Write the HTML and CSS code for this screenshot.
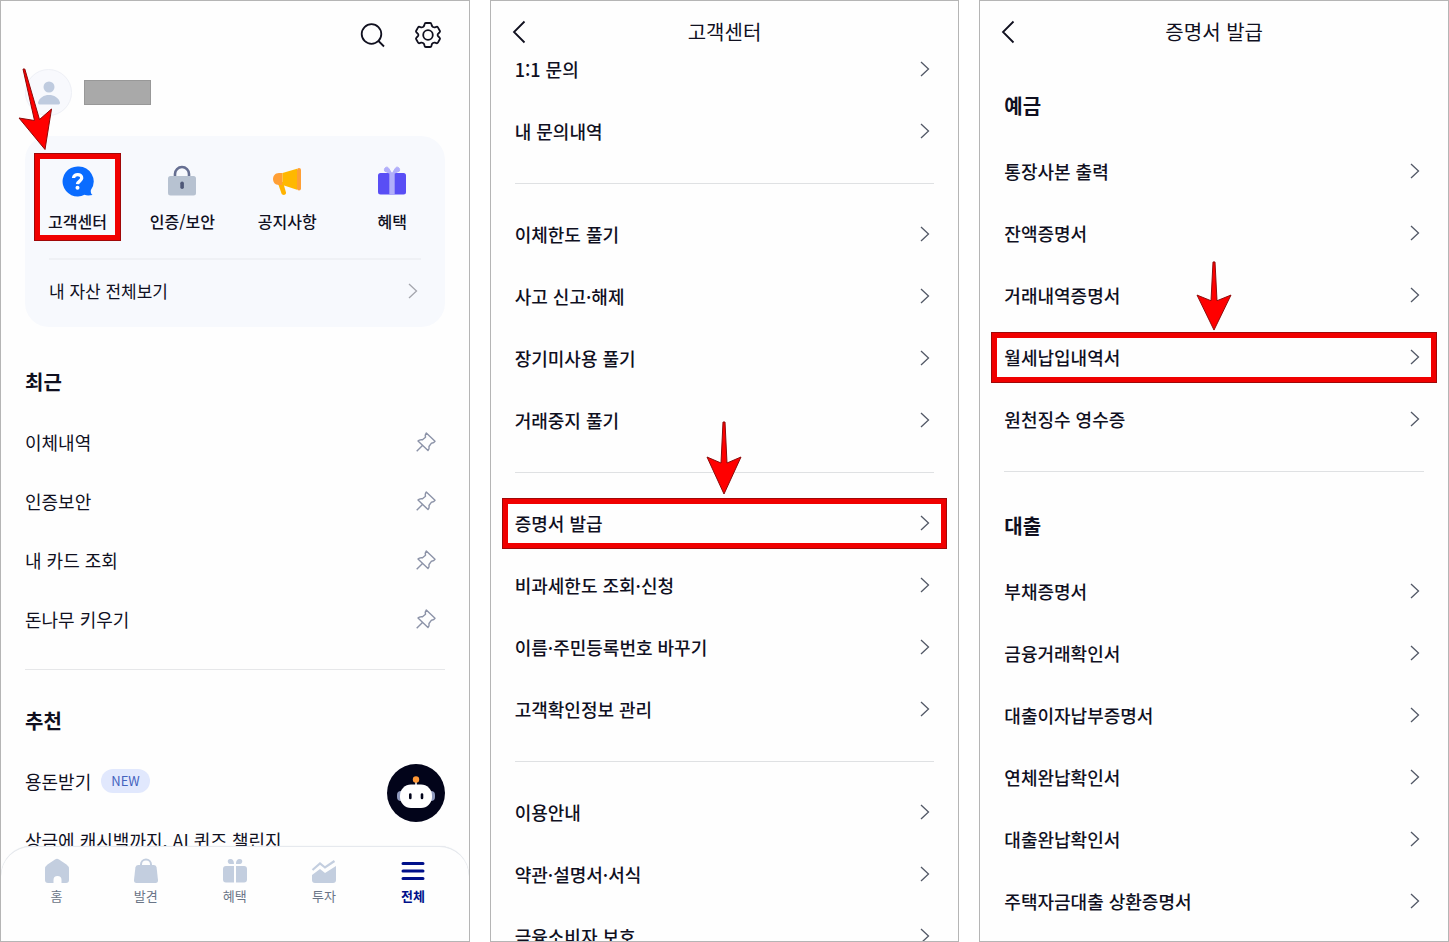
FILE: index.html
```
<!DOCTYPE html>
<html lang="ko">
<head>
<meta charset="UTF-8" />
<meta name="viewport" content="width=device-width, initial-scale=1" />
<title>월세납입내역서 발급 방법</title>
<link rel="stylesheet" href="styles.css">
</head>
<body>

<svg class="sprite" aria-hidden="true">
  <symbol id="chevron" viewBox="0 0 10 16">
    <path d="M1 1l7.500 7L1 15" fill="none" stroke="currentColor" stroke-width="1.300"/>
  </symbol>
  <symbol id="back" viewBox="0 0 14 24">
    <path d="M12.500 1.500L2 12l10.500 10.500" fill="none" stroke="currentColor" stroke-width="1.800"/>
  </symbol>
  <symbol id="pin" viewBox="0 0 20 20">
    <path d="M10.300 1L19 9.300Q18 11 15.500 11.200L13 14.500Q13.500 17 12 18.600L2 9Q3.500 7.300 6.500 7.800L9.500 5.200Q8.800 2.800 10.300 1zM6.500 13.500L.700 19.300" fill="none" stroke="currentColor" stroke-width="1.400" stroke-linejoin="round"/>
  </symbol>
  <symbol id="arrow" viewBox="0 0 36 74" preserveAspectRatio="none">
    <path d="M17 1h2l2 41 14-6-17 37L1 36l14 6z" fill="#f00" stroke="#8c0a0a" stroke-width="1"/>
  </symbol>
</svg>

<main class="screens">

  <!-- 전체 메뉴 -->
  <section class="screen">
    <div class="topbar">
      <button class="icon-btn" type="button" aria-label="검색">
        <svg width="26" height="26" viewBox="0 0 26 26" fill="none" stroke="#10101f" stroke-width="1.800">
          <circle cx="12.500" cy="12" r="9.800"/>
          <path d="M19 18.500l6 6"/>
        </svg>
      </button>
      <button class="icon-btn" type="button" aria-label="설정">
        <svg width="26" height="26" viewBox="0 0 26 26" fill="none" stroke="#10101f" stroke-width="1.800" stroke-linejoin="round">
          <path d="M10.800 1h4.400q1 0 1.200 1l.4 1.600q.3.900 1.200 1.400t1.800.3l1.600-.5q1-.3 1.500.6l1.900 3.400q.5.900-.3 1.600l-1.100 1.100q-.8.600-.8 1.500t.8 1.500l1.100 1.100q.8.700.3 1.600l-1.900 3.400q-.5.900-1.500.6l-1.600-.5q-.9-.2-1.800.3t-1.200 1.400l-.4 1.600q-.2 1-1.200 1h-4.400q-1 0-1.200-1l-.4-1.600q-.3-.9-1.200-1.400t-1.800-.3l-1.600.5q-1 .3-1.500-.6l-1.900-3.400q-.5-.9.300-1.600l1.100-1.100q.8-.6.800-1.500t-.8-1.500l-1.100-1.100q-.8-.7-.3-1.600l1.900-3.400q.5-.9 1.500-.6l1.600.5q.9.200 1.800-.3t1.200-1.400l.4-1.600q.2-1 1.200-1z"/>
          <circle cx="13" cy="13" r="4.800"/>
        </svg>
      </button>
    </div>

    <div class="profile">
      <span class="avatar">
        <svg width="24" height="26" viewBox="0 0 24 26" fill="#bfcbdf">
          <circle cx="12" cy="7" r="5.500"/>
          <path d="M1 22.500C2.500 17.500 7 15 12 15s9.500 2.500 11 7.500c0 1-.5 2-1.500 2h-19c-1 0-1.500-1-1.500-2z"/>
        </svg>
      </span>
      <span class="name-mask"></span>
    </div>

    <div class="card">
      <nav class="quick">
        <a class="quick-item" href="#">
          <svg width="34" height="34" viewBox="0 0 34 34">
            <path d="M17.500 2.500a15 15 0 1 0 7 28.300c2 .8 5 .7 8 .2-1.500-1-2-3-1.600-5a15 15 0 0 0-13.400-23.500z" fill="#0a6cff"/>
            <path d="M13.500 14c.3-4.800 8.500-4.500 8.200.2-.2 3-4 2.800-4.200 6" fill="none" stroke="#fff" stroke-width="3.300"/>
            <circle cx="17.500" cy="23.700" r="2" fill="#fff"/>
          </svg>
          <span>고객센터</span>
          <span class="mark mark-quick"></span>
          <svg class="arrow-slant" width="36" height="84" viewBox="0 0 36 84">
            <path d="M5 1h1.800l14.700 50.500L33.500 41 27 81.500 1 50l15.500 2.500z" fill="#f00" stroke="#8c0a0a"/>
          </svg>
        </a>
        <a class="quick-item" href="#">
          <svg width="34" height="34" viewBox="0 0 34 34">
            <path d="M10 13V10a7 7 0 0 1 14 0v3" fill="none" stroke="#666f92" stroke-width="2.600"/>
            <rect x="3" y="12" width="28" height="19.500" rx="2.500" fill="#b7c2d1"/>
            <rect x="15.300" y="17.500" width="3.600" height="7.500" rx="1.800" fill="#4f5878"/>
          </svg>
          <span>인증/보안</span>
        </a>
        <a class="quick-item" href="#">
          <svg width="34" height="34" viewBox="0 0 34 34">
            <path d="M7.500 18H13l3 10.500c.5 2.500-3.500 3.500-4.500 1z" fill="#ffb300"/>
            <path d="M12.500 9H9C1 9 1 21 9 21h3.500z" fill="#ff9f35"/>
            <path d="M12.500 9L27 4.800v21L12.500 21z" fill="#ffb800"/>
            <rect x="27" y="4" width="4" height="22.500" rx="2" fill="#ff9f35"/>
          </svg>
          <span>공지사항</span>
        </a>
        <a class="quick-item" href="#">
          <svg width="34" height="34" viewBox="0 0 34 34">
            <rect x="3" y="9" width="28" height="21.500" rx="2.500" fill="#594ef5"/>
            <path d="M14 9L9.500 7c-.8-4 3-5 4.300-2.500L16.500 9zM20 9l4.500-2c.8-4-3-5-4.300-2.500L17.500 9z" fill="#b1aefa" stroke="#b1aefa"/>
            <path d="M14.300 9h5.400v21.500h-5.400z" fill="#b1aefa"/>
          </svg>
          <span>혜택</span>
        </a>
      </nav>
      <a class="asset-link" href="#">내 자산 전체보기
        <svg class="chevron"><use href="#chevron"/></svg>
      </a>
    </div>

    <div class="menu">
      <h2>최근</h2>
      <ul>
        <li><a href="#">이체내역</a><button class="pin" type="button" aria-label="이체내역 고정"><svg width="20" height="20"><use href="#pin"/></svg></button></li>
        <li><a href="#">인증보안</a><button class="pin" type="button" aria-label="인증보안 고정"><svg width="20" height="20"><use href="#pin"/></svg></button></li>
        <li><a href="#">내 카드 조회</a><button class="pin" type="button" aria-label="내 카드 조회 고정"><svg width="20" height="20"><use href="#pin"/></svg></button></li>
        <li><a href="#">돈나무 키우기</a><button class="pin" type="button" aria-label="돈나무 키우기 고정"><svg width="20" height="20"><use href="#pin"/></svg></button></li>
      </ul>
    </div>

    <div class="menu">
      <h2>추천</h2>
      <ul>
        <li><a href="#">용돈받기</a><span class="badge">NEW</span></li>
        <li><a href="#">상금에 캐시백까지, AI 퀴즈 챌린지</a></li>
      </ul>
    </div>

    <button class="chatbot" type="button" aria-label="챗봇">
      <svg width="58" height="58" viewBox="0 0 58 58">
        <circle cx="29" cy="29" r="29" fill="#02041a"/>
        <path d="M29 16v6" stroke="#fff" stroke-width="1.500"/>
        <circle cx="29" cy="15.500" r="3.200" fill="#ff9836"/>
        <rect x="10" y="27" width="8" height="10" rx="4" fill="#8e99bd"/>
        <rect x="40" y="27" width="8" height="10" rx="4" fill="#8e99bd"/>
        <rect x="13" y="20.500" width="32" height="23.500" rx="11" fill="#fff"/>
        <path d="M23.300 30.500v3.500M35 30.500v3.500" stroke="#02041a" stroke-width="2.600" stroke-linecap="round"/>
      </svg>
    </button>

    <nav class="tabbar">
      <a href="#">
        <svg width="26" height="26" viewBox="0 0 26 26" fill="#c3cedf">
          <path d="M11 1.500q2-1.300 4 0l7.500 5Q25 8.300 25 11v11q0 3-3 3h-4.500v-3a4 4 0 0 0-8 0v3H4q-3 0-3-3V11q0-2.700 2.500-4.500z"/>
        </svg>
        홈
      </a>
      <a href="#">
        <svg width="26" height="26" viewBox="0 0 26 26">
          <path d="M8 8V6.500a5 5 0 0 1 10 0V8" fill="none" stroke="#c3cedf" stroke-width="2"/>
          <path d="M5 7h16q2.300 0 2.600 2.500L25 22q.2 3-2.500 3h-19Q.8 25 1 22L2.400 9.500Q2.700 7 5 7z" fill="#c3cedf"/>
        </svg>
        발견
      </a>
      <a href="#">
        <svg width="26" height="26" viewBox="0 0 26 26" fill="#c3cedf">
          <path d="M12 8v16.500H4q-3 0-3-3V11q0-3 3-3zM14 8v16.500h8q3 0 3-3V11q0-3-3-3z"/>
          <path d="M12 6H8C5 5.500 5 1 8 1s4 2 4 5zM14 6h4c3-.5 3-5 0-5s-4 2-4 5z"/>
        </svg>
        혜택
      </a>
      <a href="#">
        <svg width="26" height="26" viewBox="0 0 26 26">
          <path d="M1.500 12L9 5.500l5 4L23.500 3" fill="none" stroke="#c3cedf" stroke-width="2.200"/>
          <path d="M1 17l8-6 5 4 11-7v14q0 3-3 3H4q-3 0-3-3z" fill="#c3cedf"/>
        </svg>
        투자
      </a>
      <a class="active" href="#">
        <svg width="26" height="26" viewBox="0 0 26 26" stroke="#00108a" stroke-width="3" stroke-linecap="round">
          <path d="M3 5.500h20M3 13h20M3 20.500h20"/>
        </svg>
        전체
      </a>
    </nav>
  </section>

  <!-- 고객센터 -->
  <section class="screen">
    <header class="header">
      <button class="back" type="button" aria-label="뒤로"><svg width="14" height="24"><use href="#back"/></svg></button>
      <h1>고객센터</h1>
    </header>
    <div class="scrolled">
      <div class="group">
        <a class="row" href="#">1:1 문의<svg class="chevron"><use href="#chevron"/></svg></a>
        <a class="row" href="#">내 문의내역<svg class="chevron"><use href="#chevron"/></svg></a>
      </div>
      <div class="group">
        <a class="row" href="#">이체한도 풀기<svg class="chevron"><use href="#chevron"/></svg></a>
        <a class="row" href="#">사고 신고·해제<svg class="chevron"><use href="#chevron"/></svg></a>
        <a class="row" href="#">장기미사용 풀기<svg class="chevron"><use href="#chevron"/></svg></a>
        <a class="row" href="#">거래중지 풀기<svg class="chevron"><use href="#chevron"/></svg></a>
      </div>
      <div class="group">
        <a class="row" href="#">증명서 발급<svg class="chevron"><use href="#chevron"/></svg>
          <span class="mark"></span>
          <svg class="arrow"><use href="#arrow"/></svg>
        </a>
        <a class="row" href="#">비과세한도 조회·신청<svg class="chevron"><use href="#chevron"/></svg></a>
        <a class="row" href="#">이름·주민등록번호 바꾸기<svg class="chevron"><use href="#chevron"/></svg></a>
        <a class="row" href="#">고객확인정보 관리<svg class="chevron"><use href="#chevron"/></svg></a>
      </div>
      <div class="group">
        <a class="row" href="#">이용안내<svg class="chevron"><use href="#chevron"/></svg></a>
        <a class="row" href="#">약관·설명서·서식<svg class="chevron"><use href="#chevron"/></svg></a>
        <a class="row" href="#">금융소비자 보호<svg class="chevron"><use href="#chevron"/></svg></a>
      </div>
    </div>
  </section>

  <!-- 증명서 발급 -->
  <section class="screen">
    <header class="header">
      <button class="back" type="button" aria-label="뒤로"><svg width="14" height="24"><use href="#back"/></svg></button>
      <h1>증명서 발급</h1>
    </header>
    <div class="group titled">
      <h2>예금</h2>
      <a class="row" href="#">통장사본 출력<svg class="chevron"><use href="#chevron"/></svg></a>
      <a class="row" href="#">잔액증명서<svg class="chevron"><use href="#chevron"/></svg></a>
      <a class="row" href="#">거래내역증명서<svg class="chevron"><use href="#chevron"/></svg></a>
      <a class="row" href="#">월세납입내역서<svg class="chevron"><use href="#chevron"/></svg>
        <span class="mark"></span>
        <svg class="arrow arrow-short"><use href="#arrow"/></svg>
      </a>
      <a class="row" href="#">원천징수 영수증<svg class="chevron"><use href="#chevron"/></svg></a>
    </div>
    <div class="group titled">
      <h2>대출</h2>
      <a class="row" href="#">부채증명서<svg class="chevron"><use href="#chevron"/></svg></a>
      <a class="row" href="#">금융거래확인서<svg class="chevron"><use href="#chevron"/></svg></a>
      <a class="row" href="#">대출이자납부증명서<svg class="chevron"><use href="#chevron"/></svg></a>
      <a class="row" href="#">연체완납확인서<svg class="chevron"><use href="#chevron"/></svg></a>
      <a class="row" href="#">대출완납확인서<svg class="chevron"><use href="#chevron"/></svg></a>
      <a class="row" href="#">주택자금대출 상환증명서<svg class="chevron"><use href="#chevron"/></svg></a>
    </div>
  </section>

</main>

</body>
</html>
```
FILE: styles.css
```
* {
  box-sizing: border-box;
}
body {
  margin: 0;
  background: #fff;
  color: #10101f;
  font-family: "Noto Sans CJK KR", "Noto Sans", sans-serif;
  font-size: 18px;
  font-weight: 500;
}
a {
  color: inherit;
  text-decoration: none;
}
button {
  display: flex;
  padding: 0;
  border: none;
  background: none;
  color: inherit;
  cursor: pointer;
}
h1, h2 {
  margin: 0;
  font-size: 20px;
  line-height: 30px;
}
h1 {
  font-weight: 400;
}
h2 {
  font-weight: 700;
}
ul {
  margin: 0;
  padding: 0;
  list-style: none;
}
.sprite {
  display: none;
}
.screens {
  display: grid;
  grid-template-columns: repeat(3, 1fr);
  gap: 20px;
  height: 100vh;
}
.screen {
  position: relative;
  min-width: 0;
  padding: 0 24px;
  border: 1px solid #b5b5b5;
  background: #fefefe;
  overflow: hidden;
}

/* 전체 메뉴 */
.topbar {
  display: flex;
  justify-content: flex-end;
  align-items: center;
  gap: 30px;
  height: 68px;
  padding-right: 4px;
}
.profile {
  display: flex;
  align-items: center;
  gap: 12px;
  margin-bottom: 20px;
}
.avatar {
  display: flex;
  justify-content: center;
  align-items: center;
  width: 47px;
  height: 47px;
  border: 1px solid #eef0f6;
  border-radius: 50%;
  background: #f8f9fd;
}
.name-mask {
  width: 67px;
  height: 25px;
  border: 1px solid #989898;
  background: #a9a9a9;
}
.card {
  padding: 0 24px;
  border-radius: 24px;
  background: #f7f9fd;
}
.quick {
  display: grid;
  grid-template-columns: repeat(4, 1fr);
  margin: 0 -24px;
  padding: 28px 0 24px;
}
.quick-item {
  position: relative;
  display: flex;
  flex-direction: column;
  align-items: center;
  gap: 12px;
  font-size: 16px;
  line-height: 22px;
  padding-bottom: 2px;
}
.asset-link {
  display: flex;
  justify-content: space-between;
  align-items: center;
  height: 69px;
  padding-bottom: 6px;
  border-top: 2px solid #eff1f5;
  font-size: 17px;
  font-weight: 400;
}
.chevron {
  flex: none;
  width: 10px;
  height: 16px;
  margin-right: 4px;
  color: #525866;
}
.asset-link .chevron {
  margin-right: 3px;
  color: #a4a6ad;
}
.menu {
  padding: 40px 0 20px;
}
.menu + .menu {
  padding-top: 36px;
  border-top: 1px solid #e6e7e9;
}
.menu h2 {
  margin-bottom: 16px;
}
.menu li {
  display: flex;
  align-items: center;
  gap: 10px;
  height: 59px;
  padding-bottom: 2px;
  font-weight: 400;
}
.pin {
  margin-left: auto;
  margin-right: 9px;
  color: #8c93a8;
}
.badge {
  padding: 0 10px;
  border-radius: 12px;
  background: #e1e8fd;
  color: #4563bd;
  font-size: 13px;
  line-height: 24px;
}
.chatbot {
  position: absolute;
  right: 24px;
  bottom: 119px;
}
.tabbar {
  position: absolute;
  left: 0;
  right: 0;
  bottom: 0;
  display: flex;
  height: 95px;
  padding: 11px 11px 0;
  border-top: 1px solid #e6e9ee;
  border-radius: 30px 30px 0 0;
  background: #fefefe;
  box-shadow: 0 0 1px #d5dae0;
}
.tabbar a {
  flex: 1;
  display: flex;
  flex-direction: column;
  align-items: center;
  gap: 2px;
  color: #6a7587;
  font-size: 13px;
  font-weight: 400;
  line-height: 20px;
}
.tabbar .active {
  color: #00108a;
  font-weight: 700;
}

/* 고객센터, 증명서 발급 */
.header {
  display: grid;
  grid-template-columns: 20px 1fr 20px;
  align-items: center;
  height: 62px;
  text-align: center;
}
.back {
  margin-left: -3px;
}
.scrolled {
  margin-top: -24px;
}
.group {
  padding-bottom: 20px;
}
.group + .group {
  padding-top: 20px;
  border-top: 1px solid #dfe1e3;
}
.titled {
  padding-top: 28px;
}
.group + .titled {
  padding-top: 39px;
}
.group h2 {
  margin-bottom: 20px;
}
.row {
  position: relative;
  display: flex;
  justify-content: space-between;
  align-items: center;
  height: 62px;
  padding-bottom: 2px;
}

/* 빨간 표시 */
.mark {
  position: absolute;
  inset: 5px -13px 6px;
  border: 6px solid #f00000;
  outline: 1px solid #a00808;
  outline-offset: -1px;
}
.mark-quick {
  inset: -11px 9px -7px;
}
.arrow {
  position: absolute;
  left: 50%;
  bottom: 60px;
  width: 36px;
  height: 74px;
  margin-left: -18px;
}
.arrow-short {
  bottom: 58px;
  height: 70px;
}
.arrow-slant {
  position: absolute;
  left: -7px;
  bottom: 82px;
}
```
